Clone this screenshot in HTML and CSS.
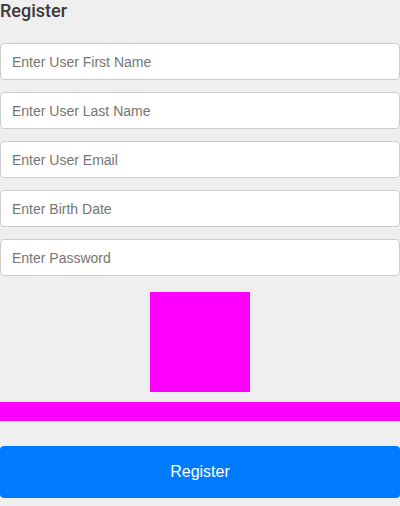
FILE: index.html
```html
<!DOCTYPE html>
<html>
<head>
<meta charset="utf-8">
<link rel="stylesheet" href="styles.css">
</head>
<body>
<div class="page">
  <h1 class="title">Register</h1>
  <form class="form">
    <input class="field" type="text" placeholder="Enter User First Name">
    <input class="field" type="text" placeholder="Enter User Last Name">
    <input class="field" type="text" placeholder="Enter User Email">
    <input class="field" type="text" placeholder="Enter Birth Date">
    <input class="field" type="password" placeholder="Enter Password">
    <div class="square-row"><div class="square"></div></div>
    <div class="bar"></div>
    <button class="btn" type="button">Register</button>
  </form>
</div>
</body>
</html>
```

FILE: styles.css
```css
html, body {
  margin: 0;
  padding: 0;
  background: #efefef;
  font-family: Roboto, "Liberation Sans", sans-serif;
}
.page {
  display: flex;
  flex-direction: column;
}
.title {
  margin: 0;
  font-size: 18px;
  line-height: 22px;
  font-weight: 500;
  color: #3a3a3a;
  padding-bottom: 21px;
}
.form {
  display: flex;
  flex-direction: column;
}
.field {
  box-sizing: border-box;
  width: 400px;
  height: 37px;
  margin: 0 0 12px 0;
  padding: 0 11px;
  border: 1px solid #cccccc;
  border-radius: 4px;
  background: #ffffff;
  font-family: "Liberation Sans", Arial, sans-serif;
  font-size: 14px;
  color: #333;
  outline: none;
}
.field::placeholder {
  color: #757575;
}
.square-row {
  display: flex;
  justify-content: center;
  padding-top: 4px;
}
.square {
  width: 100px;
  height: 100px;
  background: #ff00ff;
}
.bar {
  margin-top: 10px;
  height: 19px;
  background: #ff00ff;
}
.btn {
  margin-top: 25px;
  height: 52px;
  width: 400px;
  border: none;
  border-radius: 4px;
  background: #007bff;
  color: #ffffff;
  font-family: "Liberation Sans", Arial, sans-serif;
  font-size: 16px;
  cursor: pointer;
}
```
